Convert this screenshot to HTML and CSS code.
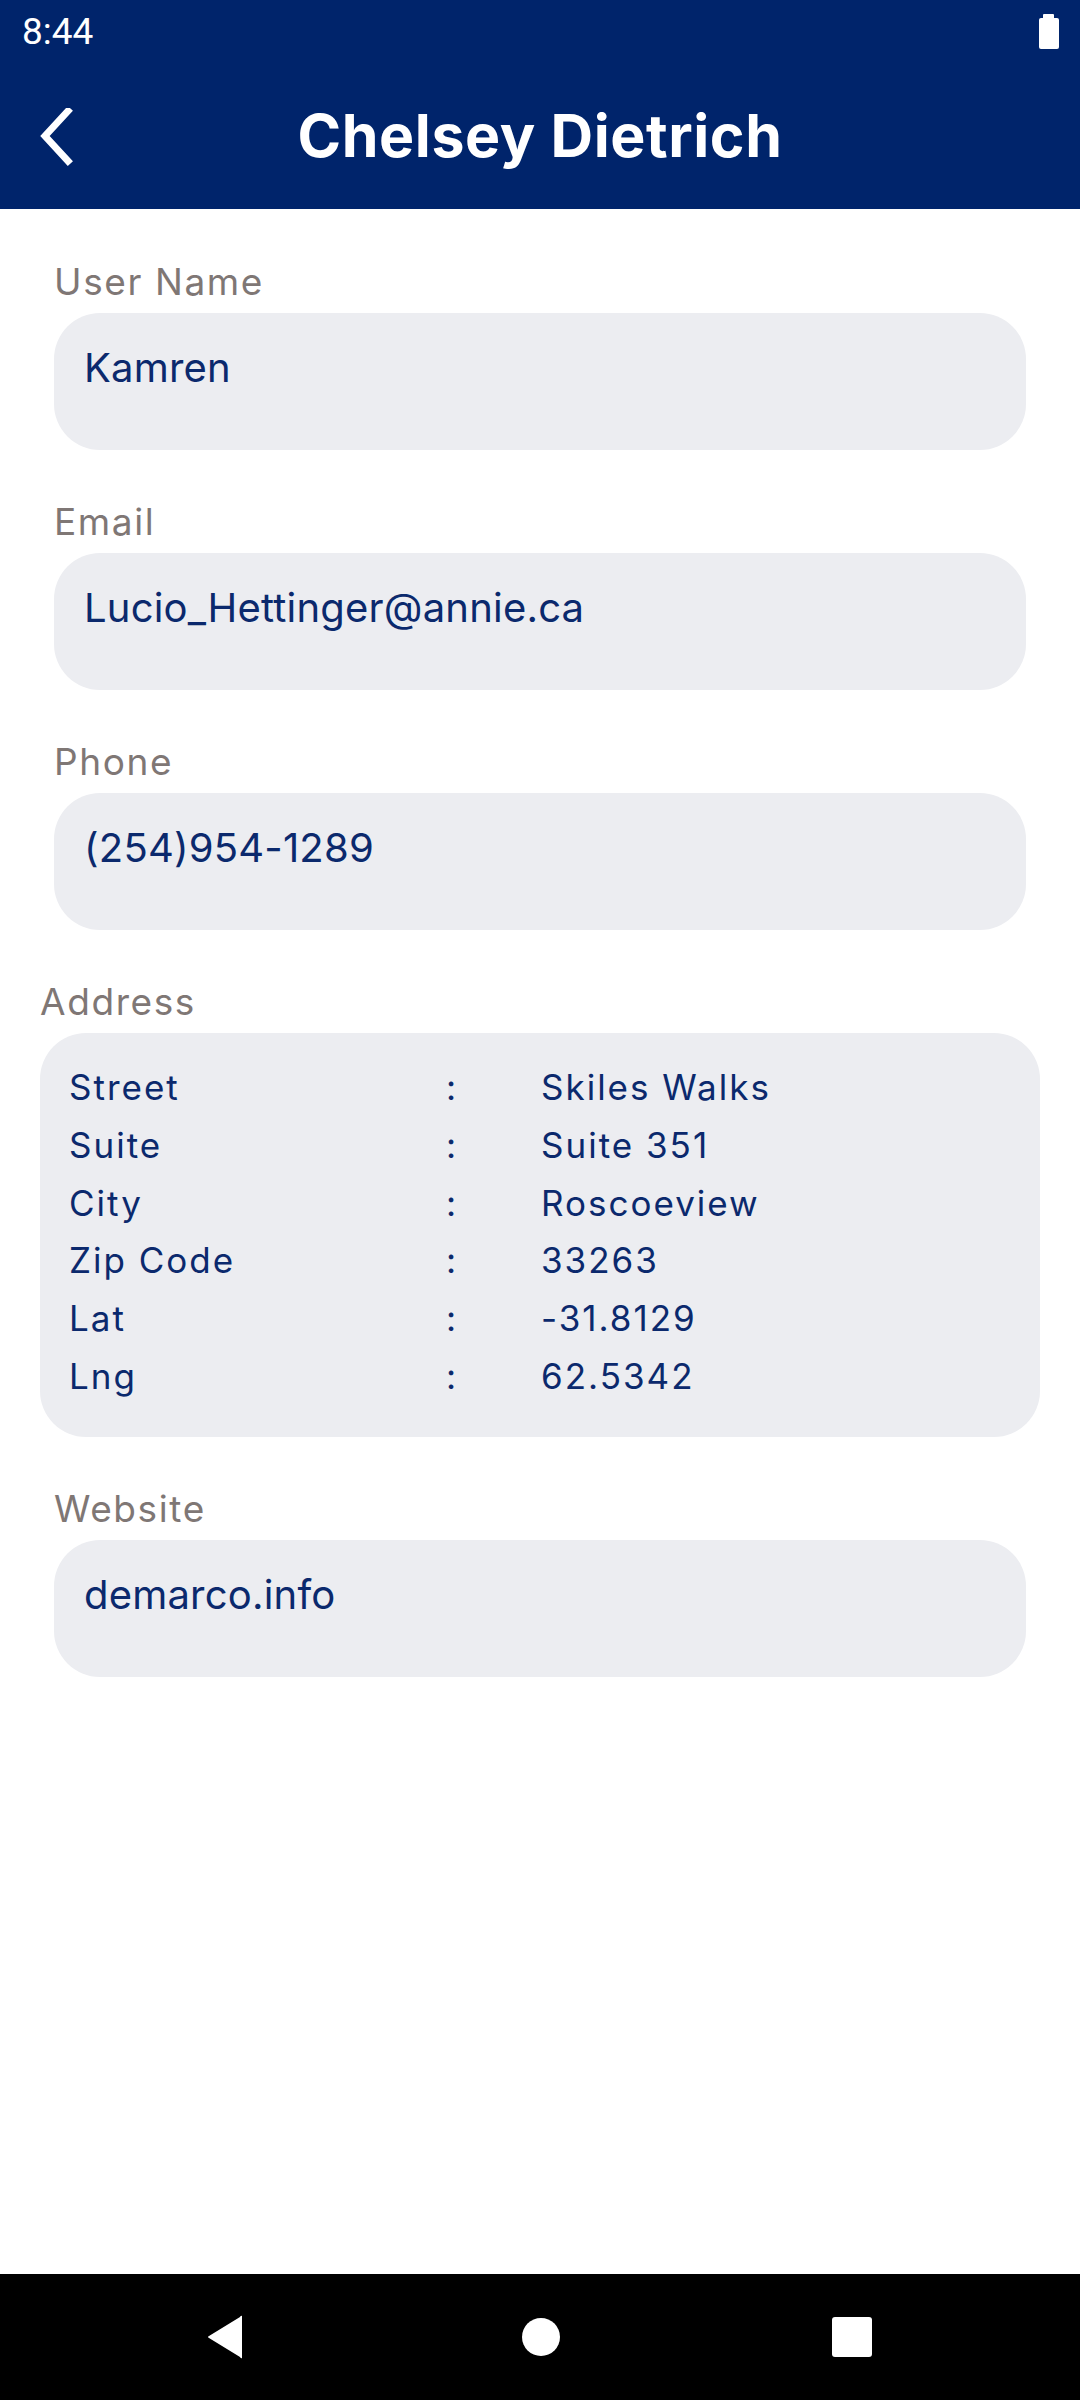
FILE: index.html
```html
<!DOCTYPE html>
<html lang="en">
<head>
<meta charset="utf-8">
<title>Chelsey Dietrich</title>
<link rel="stylesheet" href="styles.css">
</head>
<body>
<div class="screen">
  <header class="appbar">
    <div class="statusbar">
      <span class="time">8:44</span>
      <svg class="battery" width="22" height="35" viewBox="0 0 22 35">
        <rect x="5" y="0" width="11" height="5" rx="1" fill="#fff"/>
        <rect x="1" y="4" width="20" height="31" rx="2" fill="#fff"/>
      </svg>
    </div>
    <div class="toolbar">
      <svg class="back" width="40" height="60" viewBox="0 0 40 60">
        <polyline points="30,3 7,28 30,53" fill="none" stroke="#fff" stroke-width="7" stroke-linejoin="miter" stroke-linecap="square"/>
      </svg>
      <h1 class="title">Chelsey Dietrich</h1>
    </div>
  </header>

  <main class="content">
    <section class="field">
      <div class="label">User Name</div>
      <div class="box">Kamren</div>
    </section>
    <section class="field">
      <div class="label">Email</div>
      <div class="box">Lucio_Hettinger@annie.ca</div>
    </section>
    <section class="field">
      <div class="label">Phone</div>
      <div class="box">(254)954-1289</div>
    </section>
    <section class="field field-wide">
      <div class="label">Address</div>
      <div class="address">
        <div class="row"><span class="k">Street</span><span class="c">:</span><span class="v">Skiles Walks</span></div>
        <div class="row"><span class="k">Suite</span><span class="c">:</span><span class="v">Suite 351</span></div>
        <div class="row"><span class="k">City</span><span class="c">:</span><span class="v">Roscoeview</span></div>
        <div class="row"><span class="k">Zip Code</span><span class="c">:</span><span class="v">33263</span></div>
        <div class="row"><span class="k">Lat</span><span class="c">:</span><span class="v">-31.8129</span></div>
        <div class="row"><span class="k">Lng</span><span class="c">:</span><span class="v">62.5342</span></div>
      </div>
    </section>
    <section class="field">
      <div class="label">Website</div>
      <div class="box">demarco.info</div>
    </section>
  </main>

  <nav class="navbar">
    <svg class="nav-back" width="36" height="44" viewBox="0 0 36 44">
      <path d="M35 1 L35 43 Q34 44 33 42 L2 23 Q0 22 2 21 L33 2 Q34 0 35 1 Z" fill="#fff"/>
    </svg>
    <svg class="nav-home" width="38" height="38" viewBox="0 0 38 38">
      <circle cx="19" cy="19" r="19" fill="#fff"/>
    </svg>
    <svg class="nav-recent" width="40" height="40" viewBox="0 0 40 40">
      <rect x="0" y="0" width="40" height="40" rx="3" fill="#fff"/>
    </svg>
  </nav>
</div>
</body>
</html>
```
FILE: styles.css
```css
* { box-sizing: border-box; }
html, body { margin: 0; padding: 0; }
body {
  width: 1080px;
  height: 2400px;
  background: #ffffff;
  font-family: Inter, "Noto Sans", sans-serif;
}
.screen {
  width: 1080px;
  height: 2400px;
  display: flex;
  flex-direction: column;
}
.appbar {
  background: #00246b;
  height: 209px;
  display: flex;
  flex-direction: column;
}
.statusbar {
  height: 63px;
  display: flex;
  align-items: center;
  justify-content: space-between;
  padding: 0 20px 0 22px;
}
.time {
  font-family: Roboto, sans-serif;
  font-size: 37px;
  color: #ffffff;
  line-height: 1;
}
.toolbar {
  flex: 1;
  display: flex;
  align-items: center;
  justify-content: center;
  position: relative;
}
.back {
  position: absolute;
  left: 38px;
  top: 45px;
}
.title {
  margin: -2px 0 0 0;
  color: #ffffff;
  font-family: Inter, sans-serif;
  font-weight: 700;
  font-size: 59px;
  line-height: 1;
  letter-spacing: 0.6px;
}
.content {
  flex: 1;
  display: flex;
  flex-direction: column;
  padding: 52px 54px 0 54px;
}
.field {
  display: flex;
  flex-direction: column;
  gap: 10px;
  margin-bottom: 51px;
}
.field-wide {
  margin-left: -14px;
  margin-right: -14px;
}
.label {
  font-size: 37px;
  line-height: 42px;
  color: #7f7775;
  letter-spacing: 1.6px;
}
.box {
  height: 137px;
  background: #ecedf1;
  border-radius: 46px;
  padding: 31px 30px 0 30px;
  font-size: 40px;
  line-height: 48px;
  color: #0b296d;
  letter-spacing: 0.2px;
}
.address {
  background: #ecedf1;
  border-radius: 46px;
  padding: 26px 29px 31px 29px;
  color: #0b296d;
}
.row {
  display: grid;
  grid-template-columns: 377px 95px 1fr;
  font-size: 35px;
  line-height: 57.8px;
  letter-spacing: 2px;
}
.navbar {
  height: 126px;
  background: #000000;
  display: flex;
  align-items: center;
  padding-left: 207px;
}
.nav-home { margin-left: 279px; }
.nav-recent { margin-left: 272px; }
```
